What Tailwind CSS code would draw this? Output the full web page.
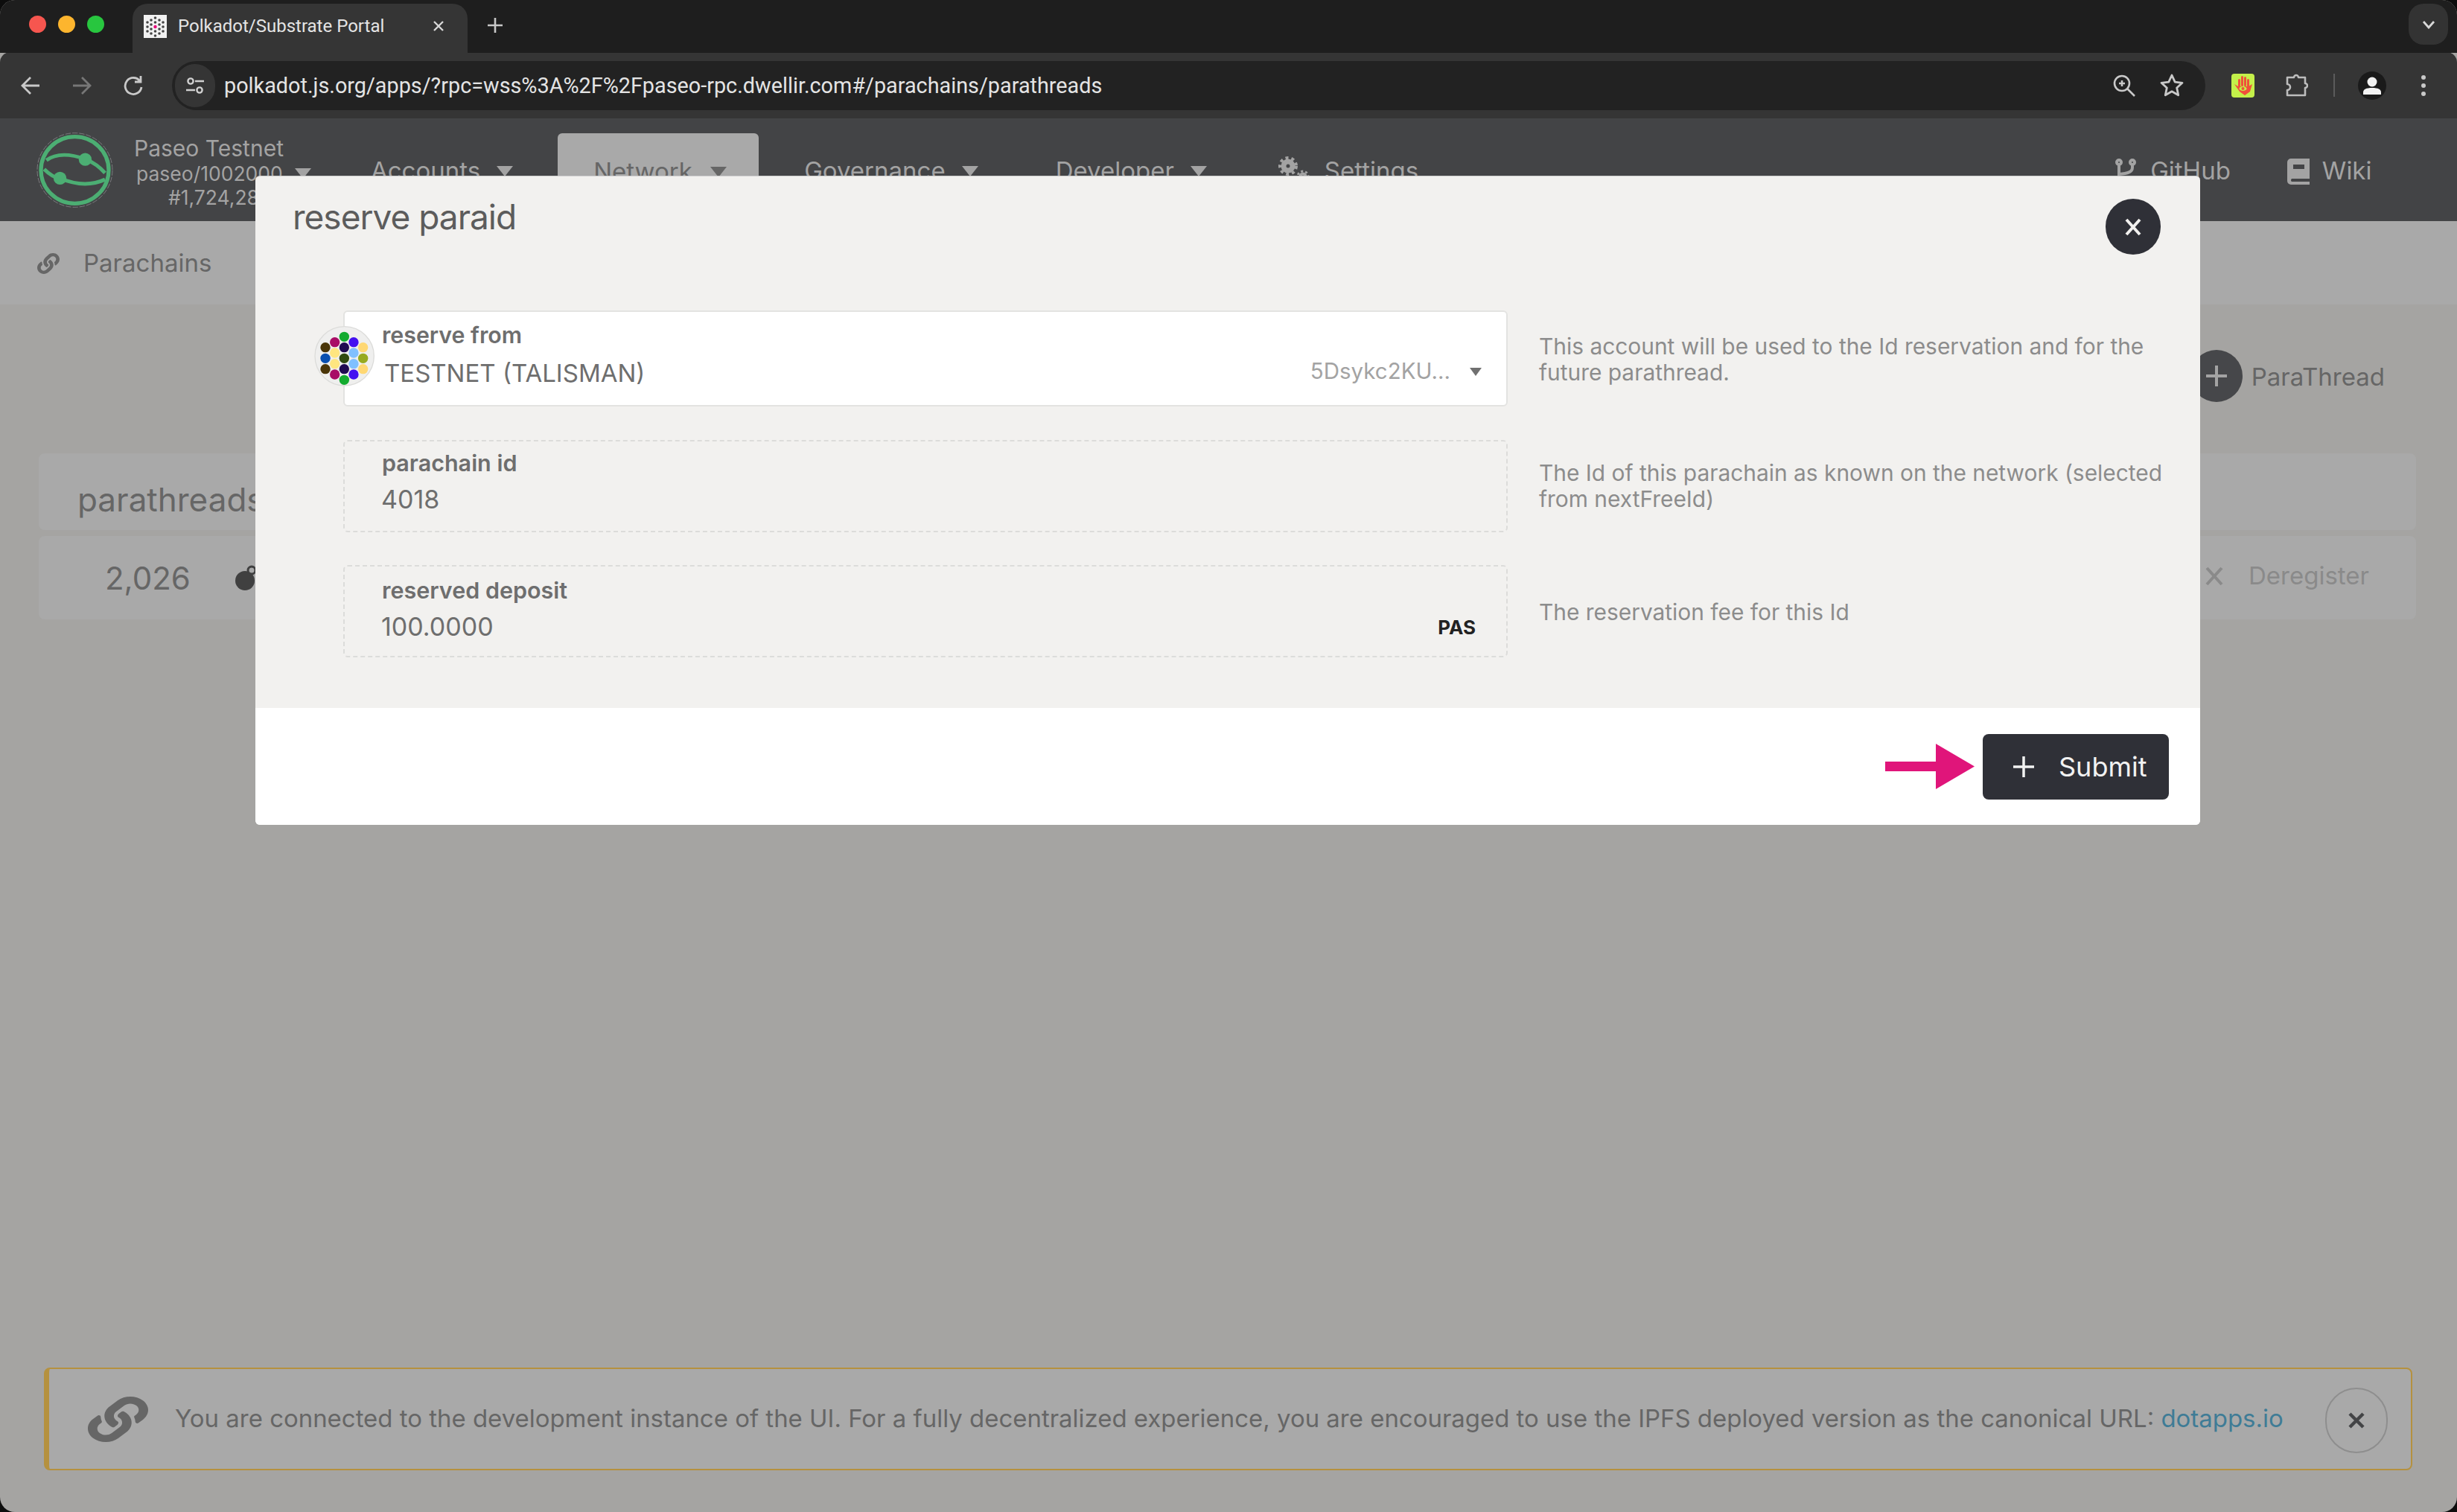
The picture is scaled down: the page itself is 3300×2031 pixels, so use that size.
<!DOCTYPE html>
<html lang="en">
<head>
    <meta charset="UTF-8">
    <title>Polkadot/Substrate Portal</title>
    <script src="https://cdn.jsdelivr.net/npm/@tailwindcss/browser@4"></script>
</head>
<body class="w-[3300px] h-[2031px] bg-[#0d0d0d] overflow-hidden font-['Inter',sans-serif]">
<div class="relative w-full h-full rounded-[20px] overflow-hidden bg-[#a5a4a2] flex flex-col">

    <!-- Browser tab strip -->
    <div class="h-[71px] shrink-0 bg-[#1e1e1e] flex items-end relative">
        <div class="flex gap-[16px] pl-[39px] pb-[27px]">
            <span class="w-[23px] h-[23px] rounded-full bg-[#f6564f]"></span>
            <span class="w-[23px] h-[23px] rounded-full bg-[#fdb52e]"></span>
            <span class="w-[23px] h-[23px] rounded-full bg-[#28c63f]"></span>
        </div>
        <div class="ml-[38px] w-[450px] h-[66px] bg-[#353535] rounded-t-[20px] flex items-center pl-[15px] pb-[6px]">
            <svg class="w-[31px] h-[31px]" viewBox="0 0 31 31">
                <rect width="31" height="31" fill="#f2f2f2"/>
                <g fill="#444">
                    <circle cx="15.5" cy="4" r="1.8"/><circle cx="10" cy="7" r="1.8"/><circle cx="21" cy="7" r="1.8"/><circle cx="5" cy="10" r="1.8"/><circle cx="15.5" cy="10" r="1.8"/><circle cx="26" cy="10" r="1.8"/>
                    <circle cx="10" cy="13" r="1.8"/><circle cx="21" cy="13" r="1.8"/><circle cx="5" cy="16" r="1.8"/><circle cx="26" cy="16" r="1.8"/><circle cx="10" cy="19" r="1.8"/><circle cx="21" cy="19" r="1.8"/>
                    <circle cx="5" cy="22" r="1.8"/><circle cx="15.5" cy="22" r="1.8"/><circle cx="26" cy="22" r="1.8"/><circle cx="10" cy="25" r="1.8"/><circle cx="21" cy="25" r="1.8"/><circle cx="15.5" cy="28" r="1.8"/>
                </g>
                <circle cx="15.5" cy="16" r="2.2" fill="#e6007a"/>
            </svg>
            <span class="ml-[15px] w-[342px] text-[24px] text-[#e4e4e4] font-['Roboto',sans-serif] whitespace-nowrap">Polkadot/Substrate Portal</span>
            <svg class="w-[16px] h-[16px]" viewBox="0 0 16 16"><path d="M2 2l12 12M14 2L2 14" stroke="#d8d8d8" stroke-width="2.4"/></svg>
        </div>
        <svg class="ml-[27px] mb-[27px] w-[20px] h-[20px]" viewBox="0 0 20 20"><path d="M10 0v20M0 10h20" stroke="#c8c8c8" stroke-width="2.6"/></svg>
        <div class="absolute right-[12px] top-[5px] w-[53px] h-[55px] rounded-[20px] bg-[#333333] flex items-center justify-center">
            <svg class="w-[18px] h-[12px]" viewBox="0 0 18 12"><path d="M2 2l7 8 7-8" fill="none" stroke="#d8d8d8" stroke-width="2.8"/></svg>
        </div>
    </div>

    <!-- Browser toolbar -->
    <div class="h-[89px] shrink-0 bg-[#353535] rounded-t-[14px] -mt-px flex items-center">
        <svg class="ml-[28px] w-[26px] h-[26px]" viewBox="0 0 26 26"><path d="M25 13H3M13 2L2 13l11 11" fill="none" stroke="#c9c9c9" stroke-width="2.8"/></svg>
        <svg class="ml-[43px] w-[26px] h-[26px]" viewBox="0 0 26 26"><path d="M1 13h22M13 2l11 11-11 11" fill="none" stroke="#777" stroke-width="2.8"/></svg>
        <svg class="ml-[43px] w-[26px] h-[28px]" viewBox="0 0 26 28"><path d="M22 8a11 11 0 1 0 2 8M23 1v8h-8" fill="none" stroke="#c9c9c9" stroke-width="2.8"/></svg>
        <div class="ml-[39px] w-[2731px] h-[66px] rounded-[33px] bg-[#222222] flex items-center relative">
            <div class="ml-[4px] w-[54px] h-[58px] rounded-full bg-[#353535] flex items-center justify-center">
                <svg class="w-[26px] h-[26px]" viewBox="0 0 26 26" fill="none" stroke="#d0d0d0" stroke-width="2.4"><circle cx="7" cy="7" r="3.6"/><path d="M13 7h12M1 19h12"/><circle cx="19" cy="19" r="3.6"/></svg>
            </div>
            <span class="ml-[12px] pt-[3px] text-[28.8px] text-[#e4e4e4] whitespace-nowrap font-['Roboto',sans-serif]">polkadot.js.org/apps/?rpc=wss%3A%2F%2Fpaseo-rpc.dwellir.com#/parachains/parathreads</span>
            <div class="ml-auto mr-[29px] flex items-center gap-[33px]">
                <svg class="w-[30px] h-[30px]" viewBox="0 0 30 30" fill="none" stroke="#c9c9c9" stroke-width="2.6"><circle cx="12" cy="12" r="10"/><path d="M19 19l10 10M12 8v8M8 12h8"/></svg>
                <svg class="w-[32px] h-[31px]" viewBox="0 0 32 31" fill="none" stroke="#c9c9c9" stroke-width="2.8" stroke-linejoin="round"><path d="M16 2l4.200 9.200 9.800 1.100-7.300 6.700 2 9.800-8.700-5-8.700 5 2-9.800L2 12.300l9.800-1.100z"/></svg>
            </div>
        </div>
        <div class="ml-[35px] w-[31px] h-[32px] rounded-[4px] bg-[#c4f04a] flex items-center justify-center">
            <svg class="w-[27px] h-[26px]" viewBox="0 0 27 26">
                <g fill="#f0503a">
                    <rect x="7" y="4" width="3" height="12" rx="1.500"/><rect x="11" y="0" width="3" height="14" rx="1.500"/><rect x="15" y="1" width="3" height="13" rx="1.500"/><rect x="19" y="4" width="3" height="12" rx="1.500"/>
                    <path d="M2 11l5 3h14l5-3-3 10-7 5-7-5z"/>
                </g>
                <ellipse cx="13.500" cy="17" rx="5" ry="3" fill="#c4f04a"/>
                <circle cx="13.500" cy="17" r="2" fill="#f0503a"/>
            </svg>
        </div>
        <svg class="ml-[40px] w-[32px] h-[32px]" viewBox="0 0 32 32" fill="none" stroke="#bdbdbd" stroke-width="2.600" stroke-linejoin="round"><path d="M4 5h9a3 3 0 0 1 6 0h9v8a3 3 0 0 1 0 6v10H4v-7a4 4 0 0 0 0-8z"/></svg>
        <div class="ml-[34px] w-[2px] h-[31px] bg-[#5b5b5b]"></div>
        <div class="ml-[31px] w-[38px] h-[38px] rounded-full bg-[#1a1a1a] flex items-center justify-center overflow-hidden">
            <svg class="w-[24px] h-[24px]" viewBox="0 0 24 24" fill="#f2f2f2"><circle cx="12" cy="7" r="6.500"/><path d="M0 24v-3c0-4 4-6 12-6s12 2 12 6v3z"/></svg>
        </div>
        <div class="ml-[47px] flex flex-col gap-[5px]">
            <span class="w-[6px] h-[6px] rounded-full bg-[#c9c9c9]"></span>
            <span class="w-[6px] h-[6px] rounded-full bg-[#c9c9c9]"></span>
            <span class="w-[6px] h-[6px] rounded-full bg-[#c9c9c9]"></span>
        </div>
    </div>

    <!-- App header -->
    <div class="h-[138px] shrink-0 bg-[#434446] flex items-center pt-[4px] text-[33px] text-[#a3a3a3] whitespace-nowrap">
        <svg class="ml-[47px] mb-[4px] w-[107px] h-[103px]" viewBox="80 55 320 310" fill="none">
            <ellipse cx="240" cy="210" rx="152" ry="150" stroke="#7a7b7d" stroke-width="3" stroke-dasharray="22 6"/>
            <ellipse cx="240" cy="210" rx="137" ry="135" stroke="#4cae73" stroke-width="16"/>
            <path d="M125 170Q180 130 282 165Q330 185 362 222M116 206Q150 240 180 243Q280 285 362 248" stroke="#4cae73" stroke-width="15"/>
            <circle cx="282" cy="167" r="26" fill="#4cae73"/>
            <circle cx="180" cy="243" r="26" fill="#4cae73"/>
        </svg>
        <div class="ml-[26px] w-[250px] flex flex-col">
            <span class="text-[30px] leading-[36px] mt-[2px]">Paseo Testnet</span>
            <span class="text-[26.5px] leading-[32px] pl-[3px] flex items-center gap-[16px]">paseo/1002000
                <svg class="w-[22px] h-[14px]" viewBox="0 0 22 14"><path d="M0 0h22L11 14z" fill="#a3a3a3"/></svg>
            </span>
            <span class="text-[26.5px] leading-[32px] pl-[46px]">#1,724,287</span>
        </div>
        <span class="ml-[68px]">Accounts</span>
        <svg class="ml-[22px] w-[22px] h-[14px]" viewBox="0 0 22 14"><path d="M0 0h22L11 14z" fill="#a3a3a3"/></svg>
        <div class="ml-[60px] self-end w-[270px] h-[118px] bg-[#a9a9a9] rounded-t-[6px] flex items-center pl-[48px] text-[#666666] pb-[14px]">
            <span>Network</span>
            <svg class="ml-[24px] w-[22px] h-[14px]" viewBox="0 0 22 14"><path d="M0 0h22L11 14z" fill="#666666"/></svg>
        </div>
        <span class="ml-[61px]">Governance</span>
        <svg class="ml-[22px] w-[22px] h-[14px]" viewBox="0 0 22 14"><path d="M0 0h22L11 14z" fill="#a3a3a3"/></svg>
        <span class="ml-[104px]">Developer</span>
        <svg class="ml-[22px] w-[22px] h-[14px]" viewBox="0 0 22 14"><path d="M0 0h22L11 14z" fill="#a3a3a3"/></svg>
        <svg class="ml-[96px] mb-[2px] w-[42px] h-[38px]" viewBox="0 0 42 38" fill="none" stroke="#a3a3a3"><circle cx="13" cy="13" r="6" stroke-width="7"/><circle cx="13" cy="13" r="11" stroke-width="4" stroke-dasharray="4 4"/><circle cx="33" cy="27" r="3.500" stroke-width="4"/><circle cx="33" cy="27" r="7" stroke-width="3" stroke-dasharray="3 3"/></svg>
        <span class="ml-[20px]">Settings</span>
        <svg class="ml-[936px] w-[28px] h-[34px]" viewBox="0 0 28 34" fill="none" stroke="#a3a3a3" stroke-width="4"><circle cx="5" cy="5" r="3"/><circle cx="23" cy="5" r="3"/><path d="M5 8v24M23 8v4c0 6-6 8-18 9"/></svg>
        <span class="ml-[19px]">GitHub</span>
        <svg class="ml-[76px] w-[30px] h-[35px]" viewBox="0 0 30 35"><path d="M5 0h25v27H6a2.500 2.500 0 0 0 0 4h24v4H5a5 5 0 0 1-5-5V5a5 5 0 0 1 5-5z" fill="#a3a3a3"/><rect x="8" y="8" width="15" height="6" fill="#434446"/></svg>
        <span class="ml-[17px]">Wiki</span>
    </div>

    <!-- Sub navigation -->
    <div class="h-[112px] shrink-0 bg-[#a9a9a9] flex items-center pt-[2px] text-[33px] text-[#666666]">
        <svg class="ml-[50px] w-[30px] h-[28px]" viewBox="0 0 512 512" preserveAspectRatio="none" fill="#666666"><path d="M326.612 185.391c59.747 59.809 58.927 155.698.36 214.59-.11.12-.24.25-.36.37l-67.2 67.2c-59.27 59.27-155.699 59.262-214.96 0-59.27-59.26-59.27-155.7 0-214.96l37.106-37.106c9.84-9.84 26.786-3.3 27.294 10.606.648 17.722 3.826 35.527 9.69 52.721 1.986 5.822.567 12.262-3.783 16.612l-13.087 13.087c-28.026 28.026-28.905 73.66-1.155 101.96 28.024 28.579 74.086 28.749 102.325.51l67.2-67.19c28.191-28.191 28.073-73.757 0-101.83-3.701-3.694-7.429-6.564-10.341-8.569a16.037 16.037 0 0 1-6.947-12.606c-.396-10.567 3.348-21.456 11.698-29.806l21.054-21.055c5.521-5.521 14.182-6.199 20.584-1.731a152.482 152.482 0 0 1 20.522 17.197zM467.547 44.449c-59.261-59.262-155.69-59.27-214.96 0l-67.2 67.2c-.12.12-.25.25-.36.37-58.566 58.892-59.387 154.781.36 214.59a152.454 152.454 0 0 0 20.521 17.196c6.402 4.468 15.064 3.789 20.584-1.731l21.054-21.055c8.35-8.35 12.094-19.239 11.698-29.806a16.037 16.037 0 0 0-6.947-12.606c-2.912-2.005-6.64-4.875-10.341-8.569-28.073-28.073-28.191-73.639 0-101.83l67.2-67.19c28.239-28.239 74.3-28.069 102.325.51 27.75 28.3 26.872 73.934-1.155 101.96l-13.087 13.087c-4.35 4.35-5.769 10.79-3.783 16.612 5.864 17.194 9.042 34.999 9.69 52.721.509 13.906 17.454 20.446 27.294 10.606l37.106-37.106c59.271-59.259 59.271-155.699.001-214.959z"/></svg>
        <span class="ml-[32px]">Parachains</span>
    </div>

    <!-- Page content behind the dialog -->
    <div class="flex-1 pl-[52px] pr-[55px] pt-[61px]">
        <div class="h-[70px] flex items-center justify-end pr-[42px]">
            <div class="w-[70px] h-[70px] rounded-full bg-[#46474a] flex items-center justify-center">
                <svg class="w-[30px] h-[30px]" viewBox="0 0 30 30"><path d="M15 1v28M1 15h28" stroke="#a3a3a3" stroke-width="4"/></svg>
            </div>
            <span class="ml-[12px] pt-[3px] text-[33px] text-[#666666] whitespace-nowrap">ParaThread</span>
        </div>
        <div class="mt-[69px] h-[103px] rounded-[8px] bg-[#a9a9a9] flex items-center pl-[52px] pt-[20px] text-[44px] text-[#666666]">parathreads</div>
        <div class="mt-[8px] h-[112px] rounded-[8px] bg-[#a9a9a9] flex items-center pl-[89px] pr-[63px] text-[#666666]">
            <span class="text-[42px]">2,026</span>
            <svg class="ml-[60px] w-[30px] h-[36px]" viewBox="0 0 30 36"><circle cx="13" cy="22" r="13" fill="#404040"/><circle cx="22" cy="8" r="5" fill="none" stroke="#404040" stroke-width="3"/></svg>
            <svg class="ml-auto mb-[4px] w-[24px] h-[26px]" viewBox="0 0 24 26"><path d="M2 2l20 22M22 2L2 24" stroke="#8a8a8a" stroke-width="4"/></svg>
            <span class="ml-[34px] mb-[4px] text-[33px] text-[#8a8a8a]">Deregister</span>
        </div>
    </div>

    <!-- Development instance banner -->
    <div class="absolute left-[59px] top-[1837px] w-[3181px] h-[138px] rounded-[8px] bg-[#a9a9a9] border-2 border-l-[7px] border-[#b5913f] flex items-center text-[32.95px] text-[#666666] whitespace-nowrap">
        <svg class="ml-[52px] shrink-0 w-[81px] h-[61px]" viewBox="0 0 512 512" preserveAspectRatio="none" fill="#666666"><path d="M326.612 185.391c59.747 59.809 58.927 155.698.36 214.59-.11.12-.24.25-.36.37l-67.2 67.2c-59.27 59.27-155.699 59.262-214.96 0-59.27-59.26-59.27-155.7 0-214.96l37.106-37.106c9.84-9.84 26.786-3.3 27.294 10.606.648 17.722 3.826 35.527 9.69 52.721 1.986 5.822.567 12.262-3.783 16.612l-13.087 13.087c-28.026 28.026-28.905 73.66-1.155 101.96 28.024 28.579 74.086 28.749 102.325.51l67.2-67.19c28.191-28.191 28.073-73.757 0-101.83-3.701-3.694-7.429-6.564-10.341-8.569a16.037 16.037 0 0 1-6.947-12.606c-.396-10.567 3.348-21.456 11.698-29.806l21.054-21.055c5.521-5.521 14.182-6.199 20.584-1.731a152.482 152.482 0 0 1 20.522 17.197zM467.547 44.449c-59.261-59.262-155.69-59.27-214.96 0l-67.2 67.2c-.12.12-.25.25-.36.37-58.566 58.892-59.387 154.781.36 214.59a152.454 152.454 0 0 0 20.521 17.196c6.402 4.468 15.064 3.789 20.584-1.731l21.054-21.055c8.35-8.35 12.094-19.239 11.698-29.806a16.037 16.037 0 0 0-6.947-12.606c-2.912-2.005-6.64-4.875-10.341-8.569-28.073-28.073-28.191-73.639 0-101.83l67.2-67.19c28.239-28.239 74.3-28.069 102.325.51 27.75 28.3 26.872 73.934-1.155 101.96l-13.087 13.087c-4.35 4.35-5.769 10.79-3.783 16.612 5.864 17.194 9.042 34.999 9.69 52.721.509 13.906 17.454 20.446 27.294 10.606l37.106-37.106c59.271-59.259 59.271-155.699.001-214.959z"/></svg>
        <span class="ml-[36px]">You are connected to the development instance of the UI. For a fully decentralized experience, you are encouraged to use the IPFS deployed version as the canonical URL: <span class="text-[#3f7c96]">dotapps.io</span></span>
        <div class="absolute left-[3057px] top-[25px] w-[84px] h-[88px] rounded-full border-2 border-[#8e8e8e] flex items-center justify-center">
            <svg class="w-[22px] h-[22px]" viewBox="0 0 22 22"><path d="M2 2l18 18M20 2L2 20" stroke="#434446" stroke-width="4.500"/></svg>
        </div>
    </div>

    <!-- Reserve paraid dialog -->
    <div class="absolute left-[343px] top-[236px] w-[2612px] h-[872px] rounded-[6px] overflow-hidden bg-[#f2f1ef] border-t border-[#cfcfcf] flex flex-col">
        <div class="h-[180px] shrink-0 flex items-start justify-between pl-[50px] pr-[53px]">
            <h1 class="mt-[25px] text-[46px] leading-[58px] text-[#5c5c5c] tracking-[-1px]">reserve paraid</h1>
            <div class="mt-[30px] w-[74px] h-[75px] rounded-full bg-[#2f3037] flex items-center justify-center">
                <svg class="w-[22px] h-[24px]" viewBox="0 0 22 24"><path d="M2 2l18 20M20 2L2 22" stroke="#f2f1ef" stroke-width="4"/></svg>
            </div>
        </div>

        <div class="flex-1 flex flex-col pl-[118px]">
            <!-- reserve from -->
            <div class="flex items-center h-[129px]">
                <div class="relative w-[1564px] h-full bg-white border-2 border-[#e3e3e1] rounded-[6px] pl-[50px] pt-[13px]">
                    <svg class="absolute left-[-53px] top-[11px] w-[100px] h-[100px]" viewBox="0 0 300 300">
                        <circle cx="158" cy="145" r="119" fill="#efefee" stroke="#dcdcda" stroke-width="4"/>
                        <circle cx="157" cy="67" r="20" fill="#13ab2f"/>
                        <circle cx="119" cy="89" r="20" fill="#a80d66"/><circle cx="195" cy="89" r="20" fill="#4310f0"/>
                        <circle cx="81" cy="110" r="20" fill="#4a3508"/><circle cx="157" cy="110" r="20" fill="#1f0a52"/><circle cx="233" cy="110" r="20" fill="#ffd873"/>
                        <circle cx="119" cy="132" r="20" fill="#ffe680"/><circle cx="195" cy="132" r="20" fill="#80c0ff"/>
                        <circle cx="81" cy="154" r="20" fill="#0a50b0"/><circle cx="157" cy="154" r="20" fill="#2f4a10"/><circle cx="233" cy="154" r="20" fill="#97aa20"/>
                        <circle cx="119" cy="176" r="20" fill="#ffe680"/><circle cx="195" cy="176" r="20" fill="#80c0ff"/>
                        <circle cx="81" cy="197" r="20" fill="#4a3508"/><circle cx="157" cy="197" r="20" fill="#1f0a52"/><circle cx="233" cy="197" r="20" fill="#ffd873"/>
                        <circle cx="119" cy="219" r="20" fill="#a80d66"/><circle cx="195" cy="219" r="20" fill="#4310f0"/>
                        <circle cx="157" cy="241" r="20" fill="#13ab2f"/>
                    </svg>
                    <div class="text-[30.3px] leading-[36px] font-semibold text-[#6e6e6e]">reserve from</div>
                    <div class="mt-[8px] pl-[3px] flex items-center pr-[33px]">
                        <span class="text-[33px] leading-[44px] text-[#6e6e6e]">TESTNET (TALISMAN)</span>
                        <span class="ml-auto text-[29.5px] text-[#a3a3a3] mb-[6px]">5Dsykc2KU...</span>
                        <svg class="ml-[26px] w-[16px] h-[11px] mb-[4px]" viewBox="0 0 16 11"><path d="M0 0h16L8 11z" fill="#707070"/></svg>
                    </div>
                </div>
                <p class="ml-[42px] w-[850px] text-[29.9px] leading-[35px] text-[#8c8c8c] pt-[3px]">This account will be used to the Id reservation and for the future parathread.</p>
            </div>

            <!-- parachain id -->
            <div class="mt-[45px] flex items-center h-[124px]">
                <div class="w-[1564px] h-full border-2 border-dashed border-[#dcdcda] rounded-[6px] pl-[50px] pt-[11px]">
                    <div class="text-[30.5px] leading-[36px] font-semibold text-[#6e6e6e]">parachain id</div>
                    <div class="mt-[9px] -ml-[1px] text-[34px] leading-[44px] text-[#6e6e6e]">4018</div>
                </div>
                <p class="ml-[42px] w-[850px] text-[29.9px] leading-[35px] text-[#8c8c8c] pb-[1px]">The Id of this parachain as known on the network (selected from nextFreeId)</p>
            </div>

            <!-- reserved deposit -->
            <div class="mt-[44px] flex items-center h-[124px]">
                <div class="w-[1564px] h-full border-2 border-dashed border-[#dcdcda] rounded-[6px] pl-[50px] pr-[40px] pt-[14px]">
                    <div class="text-[30.5px] leading-[36px] font-semibold text-[#6e6e6e]">reserved deposit</div>
                    <div class="mt-[9px] -ml-[1px] flex items-center justify-between">
                        <span class="text-[34px] leading-[44px] text-[#6e6e6e]">100.0000</span>
                        <span class="mr-[1px] text-[26px] font-bold text-[#222222]">PAS</span>
                    </div>
                </div>
                <p class="ml-[42px] w-[850px] text-[29.9px] leading-[35px] text-[#8c8c8c] pt-[3px]">The reservation fee for this Id</p>
            </div>
        </div>

        <div class="h-[157px] shrink-0 bg-white flex items-center justify-end pr-[42px]">
            <svg class="w-[120px] h-[61px]" viewBox="0 0 120 61"><path d="M0 24h68V0l52 30.500L68 61V37H0z" fill="#e0157a"/></svg>
            <div class="ml-[11px] w-[250px] h-[88px] rounded-[8px] bg-[#2f3037] flex items-center pl-[40px]">
                <svg class="w-[30px] h-[30px]" viewBox="0 0 30 30"><path d="M15 1v28M1 15h28" stroke="#f2f2f2" stroke-width="3.500"/></svg>
                <span class="ml-[32px] text-[36px] text-[#f2f2f2]">Submit</span>
            </div>
        </div>
    </div>
</div>
</body>
</html>
